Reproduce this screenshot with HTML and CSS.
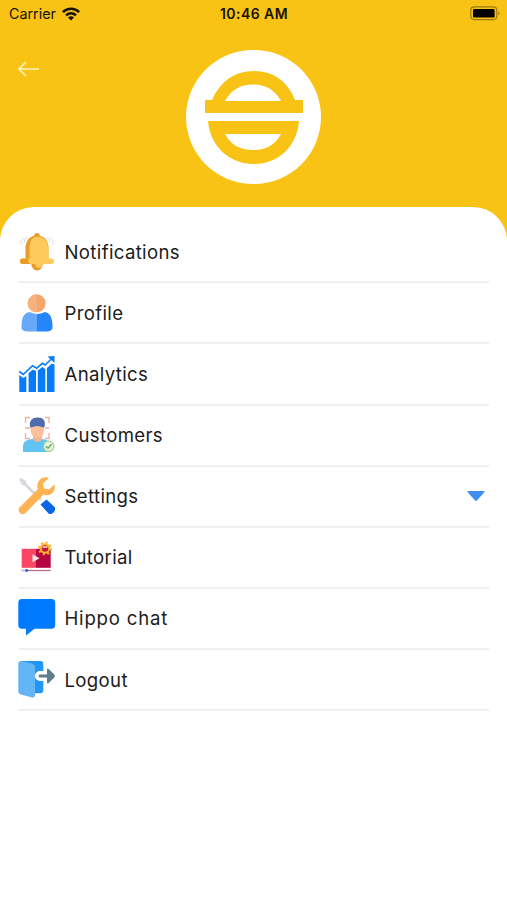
FILE: index.html
```html
<!DOCTYPE html>
<html lang="en">
<head>
  <meta charset="utf-8">
  <meta name="viewport" content="width=device-width, initial-scale=1.0">
  <title>Menu</title>
  <link rel="stylesheet" href="styles.css">
</head>
<body>
  <header class="top">
    <div class="status">
      <div class="carrier">
        <span>Carrier</span>
        <svg class="wifi" width="18" height="14" viewBox="0 0 18 14">
          <g fill="none" stroke="#171200" stroke-width="2.5">
            <path d="M.9 5.1C5.5.6 12.5.6 17.1 5.1" />
            <path d="M4 8.4C7 5.6 11 5.6 14 8.4" />
          </g>
          <path d="M6 10.4Q9 8.1 12 10.4L9 13.6Z" fill="#171200" />
        </svg>
      </div>
      <div class="time">10:46 AM</div>
      <svg class="battery" width="31" height="15" viewBox="0 0 31 15">
        <rect x=".8" y=".8" width="26" height="12.8" rx="3.5" fill="none" stroke="#9b7a0e" stroke-width="1.2" />
        <rect x="3" y="3" width="21.6" height="8.4" rx="1.2" fill="#000" />
        <path d="M28.3 5.2Q31 7.2 28.3 9.2Z" fill="#9b7a0e" />
      </svg>
    </div>
    <div class="brand">
      <svg class="back" width="22" height="16" viewBox="0 0 22 16">
        <path d="M8 1L1 8l7 7M1 8h20" fill="none" stroke="#fff3bd" stroke-width="1.6" />
      </svg>
      <div class="logo">
        <svg width="100" height="96" viewBox="0 0 100 96">
          <path d="M8 30C16 12 30 1 50 1s34 11 41 29h8v13H1V30ZM21 31h56C71 20 62 14.5 49 14.5S27 20 21 31Z" fill="#f9c316" fill-rule="evenodd" />
          <path d="M4 51h91C93 76 75 94 50 94S6 76 4 51ZM21 64c6 11 15 16 28 16s22-5 28-16Z" fill="#f9c316" fill-rule="evenodd" />
        </svg>
      </div>
    </div>
  </header>
  <main class="sheet">
    <ul class="menu">
      <li>
        <svg class="icon" viewBox="0 0 38 38">
          <path d="M6 4Q2 7 3 12M9 4Q6 6 6 10M32 4q4 3 3 8M29 4q3 2 3 6" fill="none" stroke="#e0e0e0" />
          <circle cx="19" cy="2.8" r="2.8" fill="#e99b26" />
          <path d="M13 30h12q-1 7.500-6 7.500T13 30Z" fill="#e99b26" />
          <path d="M16.500 30H25q-1 5-4 5t-4.500-5Z" fill="#fdc65a" />
          <path d="M7.500 27V13Q9 2.500 19 2.500T30.500 13v14Z" fill="#e99b26" />
          <path d="M11.500 27V14Q12 3.500 20 3.500T30.500 14v13Z" fill="#fdca5b" />
          <rect x="2" y="25.5" width="34" height="5.5" rx="2.7" fill="#fdca5b" />
          <path d="M11 25.500H4.700a2.700 2.700 0 0 0 0 5.500H12q-3-3-1-5.500Z" fill="#e99b26" />
        </svg>
        <span>Notifications</span>
      </li>
      <li>
        <svg class="icon" viewBox="0 0 38 38">
          <circle cx="18.7" cy="9.3" r="9" fill="#f5a66c" />
          <path d="M18.700.3a9 9 0 0 0 0 18Z" fill="#f7b17d" />
          <path d="M11 18Q19 22 27 18q7 1 7.500 13v3.500Q33 37.500 29 37.500H19V20Z" fill="#2585fb" />
          <path d="M19 20.200Q14 20 11 18q-7 1-7.500 13v3.500Q5 37.500 9 37.500h10Z" fill="#66a9fb" />
        </svg>
        <span>Profile</span>
      </li>
      <li>
        <svg class="icon" viewBox="0 0 38 38">
          <path d="M1.300 20l4 3 3-2v16h-7ZM10.600 18l4.400-3.500 3 1.500v21h-7.400ZM19.800 15.500l4.500-3.500 3 2v23h-7.500ZM28.900 13l5-4.500 2.600 1V37h-7.600Z" fill="#087bfa" />
          <path d="M1.300 16.500L5.300 19.500 14.500 10.700l4.200 2.600 5.600-5L27 10l7.500-7" fill="none" stroke="#087bfa" stroke-width="1.7" />
          <path d="M29.500 1.500l7-.5v7Z" fill="#087bfa" />
        </svg>
        <span>Analytics</span>
      </li>
      <li>
        <svg class="icon" viewBox="0 0 38 38">
          <path d="M12 1.500H7.500V7M27 1.500h4V7M12 22.500H7.500V17M27 22.500h4V17M7 12h5M27 12h4" fill="none" stroke="#f8aaa5" stroke-width="1.3" />
          <path d="M5 36v-6q0-6 9-7h10q9 1 9 7v6Z" fill="#60c3f3" />
          <path d="M15 19h9v4.500q-4.500 5-9 0Z" fill="#f5b28c" />
          <path d="M12.500 10H26v5q-1 7-6.500 7t-7-7Z" fill="#fdc09b" />
          <path d="M12 11Q10.500 1.500 19.500 1.500T26.500 11l-1.500.5q-5.500-3-11.500 0Z" fill="#506cac" />
          <circle cx="30.7" cy="30.3" r="5.2" fill="#e8f4df" stroke="#a8cf9a" stroke-width="1.3" />
          <path d="M28 30.300l2 2 3.500-4" fill="none" stroke="#69a566" stroke-width="1.4" />
        </svg>
        <span>Customers</span>
      </li>
      <li>
        <svg class="icon" viewBox="0 0 38 38">
          <path d="M1 2l2-1 5 3 .5 2.500L24 22l-2 2L6.500 8.500 4 8Z" fill="#d5d9dd" />
          <path d="M22.500 27.500l6-5 8 7.500q1.500 3-1 5.500t-5 1Z" fill="#0865e5" />
          <path d="M31 .8Q24-1 20.500 4.500q-2 4-.5 7.500L1.500 30.500q-2 3 .5 5.500t5.500 0L25.500 17.500q5 2 9-1.500 3.500-4 2-8.500l-5.500 5-5-1-1-5Z" fill="#feb252" />
        </svg>
        <span>Settings</span>
        <svg class="caret" width="18" height="10" viewBox="0 0 18 10">
          <path d="M1 0h16q1 0 .5 1L10 9.400q-1 .8-2 0L.5 1Q0 0 1 0Z" fill="#3f8ff2" />
        </svg>
      </li>
      <li>
        <svg class="icon" viewBox="0 0 38 38">
          <path d="M3.700 10.800H18v19H3.700Z" fill="#fa4664" />
          <path d="M18 10.800h14.700v19H18Z" fill="#b50542" />
          <path d="M14.500 16.300l7 4-7 4Z" fill="#ffe5e5" />
          <circle cx="27" cy="10.5" r="4.2" fill="#c9183f" stroke="#ffb42d" stroke-width="2" />
          <circle cx="27" cy="10.5" r="6" fill="none" stroke="#ffb42d" stroke-width="2" stroke-dasharray="2 2.7" />
          <path d="M24.500 9h5" stroke="#ffe5c0" stroke-width="1.5" />
          <path d="M3.700 32.500h29" stroke="#b96d89" stroke-width="1.3" />
          <path d="M3.700 32.500h6" stroke="#a9bcf0" stroke-width="1.3" />
          <circle cx="8.7" cy="32.5" r="1.4" fill="#3156e8" />
        </svg>
        <span>Tutorial</span>
      </li>
      <li>
        <svg class="icon" viewBox="0 0 38 38">
          <path d="M4 0h29.500Q37.200 0 37.200 4v22q0 3.800-3.700 3.800H16.500L8 36.500V29.800H4Q.3 29.800.3 26V4Q.3 0 4 0Z" fill="#007bff" />
        </svg>
        <span class="wide">Hippo chat</span>
      </li>
      <li>
        <svg class="icon" viewBox="0 0 38 38">
          <path d="M3 0h19.500Q25.300 0 25.300 3v26q0 3.300-3 3.300H12L3 3Z" fill="#2196f3" />
          <path d="M3 0l11 2.500q3 1 3 4V34q0 3-3 2.500L3 33.500Q.3 33 .3 30V3Q.3 0 3 0Z" fill="#64b5f6" />
          <path d="M27 10h-5a5 5 0 0 0 0 10h5Z" fill="#fff" />
          <path d="M22 13.500h7V9q0-2 2-.7l5.500 5.500q1 1.200 0 2.400L31 21.700q-2 1.300-2-.7v-4.500h-7q-1.500 0-1.500-1.500t1.500-1.500Z" fill="#607d8b" />
        </svg>
        <span>Logout</span>
      </li>
    </ul>
  </main>
</body>
</html>
```
FILE: styles.css
```css
* {
  box-sizing: border-box;
  margin: 0;
  padding: 0;
}

body {
  height: 900px;
  background: #fff;
  font-family: Inter, "Liberation Sans", sans-serif;
  overflow: hidden;
}

/* yellow header */
.top {
  height: 237px;
  background: #f9c316;
}

.status {
  display: grid;
  grid-template-columns: 1fr auto 1fr;
  align-items: center;
  height: 27px;
  padding: 0 6px 0 9px;
  color: #171200;
  font-size: 14.3px;
}

.carrier {
  display: flex;
  align-items: center;
  gap: 6px;
}

.time {
  margin-right: 2px;
  font-size: 14px;
  font-weight: 600;
  letter-spacing: 0.45px;
}

.battery {
  justify-self: end;
}

.brand {
  display: grid;
  grid-template-columns: 1fr 135px 1fr;
  align-items: start;
  padding: 22.5px 18px 0;
}

.back {
  margin-top: 11.5px;
}

.logo {
  display: flex;
  align-items: center;
  justify-content: center;
  height: 134.5px;
  padding-top: 1.5px;
  background: #fff;
  border-radius: 50%;
}

/* white sheet with the menu */
.sheet {
  position: relative;
  height: 693px;
  margin-top: -30px;
  padding: 15.3px 18px 0 19px;
  background: #fff;
  border-radius: 34px 34px 0 0;
}

.menu {
  list-style: none;
}

.menu li {
  display: flex;
  align-items: center;
  height: 61.1px;
  border-bottom: 2px solid #efefef;
  color: #1c1c1c;
  font-size: 18.6px;
  letter-spacing: 0.35px;
}

.menu .wide {
  letter-spacing: 0.8px;
}

.icon {
  width: 38px;
  height: 38px;
  margin: 0 8.5px 0 -1px;
  overflow: visible;
}

.caret {
  margin: 0 4px 0 auto;
}
```
